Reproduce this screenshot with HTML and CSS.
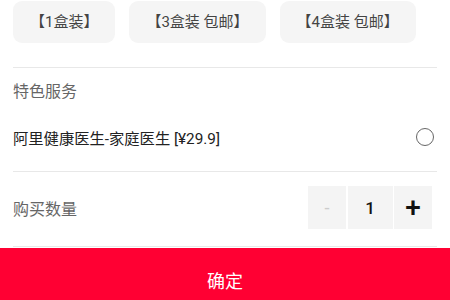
FILE: index.html
```html
<!DOCTYPE html>
<html lang="zh">
<head>
    <meta charset="UTF-8">
    <meta name="viewport" content="width=device-width, initial-scale=1.0">
    <title>选择规格</title>
    <link rel="stylesheet" href="styles.css">
</head>
<body>
    <div class="sheet">
        <!-- 规格 -->
        <div class="specs">
            <div class="spec">【1盒装】</div>
            <div class="spec">【3盒装 包邮】</div>
            <div class="spec">【4盒装 包邮】</div>
        </div>

        <!-- 特色服务 -->
        <section class="service">
            <div class="section-title">特色服务</div>
            <div class="service-item">
                <span>阿里健康医生-家庭医生 [¥29.9]</span>
                <span class="radio"></span>
            </div>
        </section>

        <!-- 购买数量 -->
        <section class="quantity">
            <div class="section-title">购买数量</div>
            <div class="stepper">
                <div class="step minus">-</div>
                <div class="step count">1</div>
                <div class="step plus">+</div>
            </div>
        </section>
    </div>

    <button class="confirm">确定</button>
</body>
</html>
```

FILE: styles.css
```css
/* 全局样式 */
body {
    font-family: Roboto, 'Noto Sans CJK SC', sans-serif;
    margin: 0;
    background-color: #FFFFFF;
    color: #333333;
    overflow: hidden;
}

.sheet {
    padding: 0 13px;
}

/* 规格 */
.specs {
    display: flex;
    gap: 14px;
    padding-top: 1px;
    padding-bottom: 24px;
    border-bottom: 1px solid #E8E8E8;
}

.spec {
    height: 42px;
    line-height: 42px;
    padding: 0 17px;
    background-color: #F5F5F5;
    border-radius: 9px;
    font-size: 15px;
    color: #444444;
}

/* 特色服务 */
.service {
    padding-bottom: 13px;
    border-bottom: 1px solid #E8E8E8;
}

.section-title {
    font-size: 16px;
    color: #666666;
}

.service .section-title {
    height: 48px;
    line-height: 48px;
}

.service-item {
    display: flex;
    align-items: center;
    justify-content: space-between;
    height: 42px;
    font-size: 15.3px;
    color: #222222;
}

.radio {
    width: 16px;
    height: 16px;
    margin-right: 3px;
    border: 1.2px solid #666666;
    border-radius: 50%;
}

/* 购买数量 */
.quantity {
    display: flex;
    align-items: center;
    justify-content: space-between;
    padding: 14px 0 17px;
    border-bottom: 1px solid #E8E8E8;
    margin-bottom: 1px;
}

.stepper {
    display: flex;
    gap: 1.5px;
    margin-right: 5px;
}

.step {
    height: 43px;
    display: flex;
    align-items: center;
    justify-content: center;
    background-color: #F4F4F4;
    color: #111111;
}

.minus {
    width: 38px;
    color: #CCCCCC;
    font-size: 18px;
}

.count {
    width: 45px;
    font-size: 17px;
    font-weight: 500;
}

.plus {
    width: 38px;
    font-size: 28px;
    font-weight: 500;
}

/* 确定按钮 */
.confirm {
    display: block;
    width: 100%;
    height: 64px;
    border: none;
    background-color: #FF0033;
    color: #FFFFFF;
    font-family: inherit;
    font-size: 18px;
}
```
